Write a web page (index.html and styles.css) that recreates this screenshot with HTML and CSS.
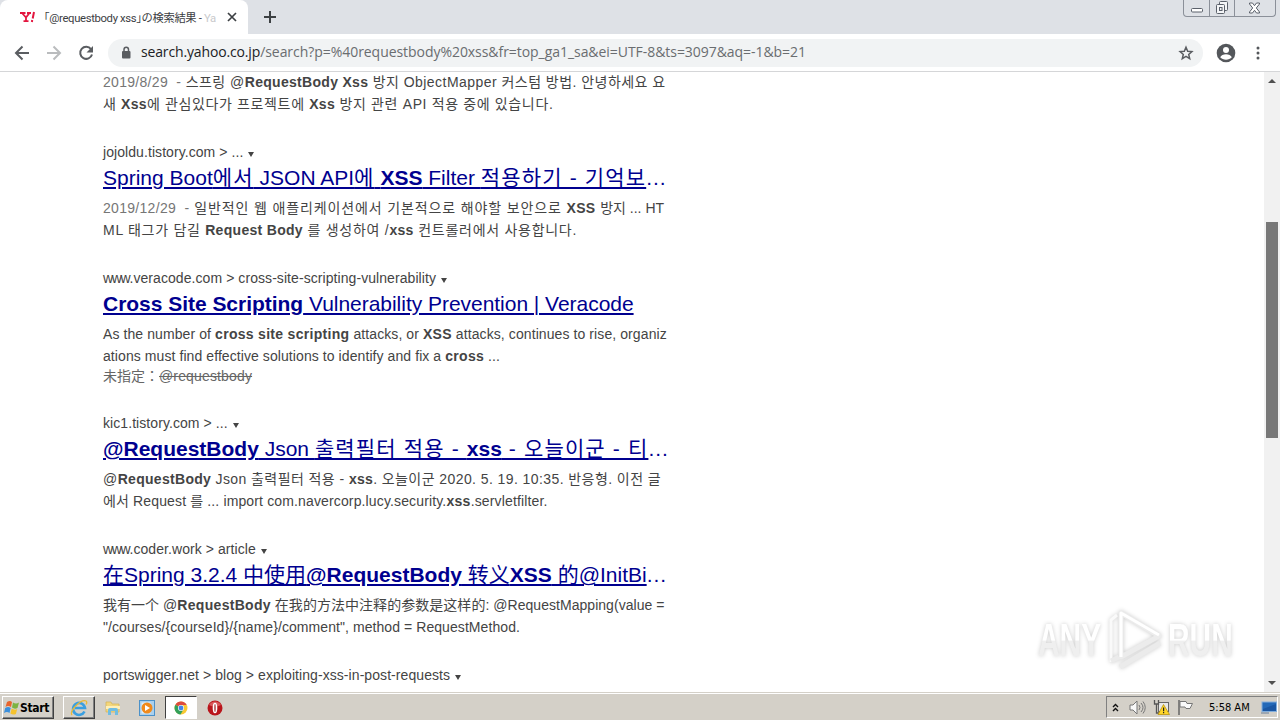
FILE: index.html
```html
<!DOCTYPE html>
<html lang="ja">
<head>
  <meta charset="UTF-8" />
  <title>「@requestbody xss」の検索結果 - Yahoo!検索</title>
  <link rel="stylesheet" href="styles.css">
</head>
<body>
  <div class="desktop">
    <header class="tab-strip">
      <div class="tab">
        <svg class="favicon" width="16" height="12" viewBox="0 0 16 12" fill="none" stroke="#e3163f"><path d="M0 2h5.500M7 2h4M2 2l4 4.500M9.500 2L6 6.500V10M3.500 10.200h5" stroke-width="1.800"/><path d="M14 1l-1.300 6.500M12.200 9l-.3 2" stroke-width="2"/></svg>
        <span class="tab-title">「@requestbody xss」の検索結果 - <span class="faded">Ya</span></span>
        <svg class="tab-close" width="10" height="10" viewBox="0 0 10 10"><path d="M1 1l8 8M9 1L1 9" stroke="#3c4043" stroke-width="1.700"/></svg>
      </div>
      <svg class="new-tab" width="12" height="12" viewBox="0 0 12 12"><path d="M6 0v12M0 6h12" stroke="#3c4043" stroke-width="2"/></svg>
      <div class="window-buttons">
        <span class="win-btn"><svg width="14" height="6" viewBox="0 0 14 6"><rect x="1.500" y="1.500" width="11" height="3.500" rx="1" fill="#fff" stroke="#5b616b"/></svg></span>
        <span class="win-btn"><svg width="14" height="14" viewBox="0 0 14 14" fill="#f4f5f7" stroke="#5b616b"><rect x="4.500" y=".5" width="8" height="9" rx="1"/><rect x="1.500" y="3.500" width="8" height="9" rx="1"/><rect x="4.500" y="6.500" width="2.500" height="3"/></svg></span>
        <span class="win-btn win-close"><svg width="13" height="12" viewBox="0 0 13 12"><path d="M1.500 1h3l2 2.700L8.500 1h3v1L8.300 6l3.200 4v1h-3l-2-2.700L4.500 11h-3v-1l3.200-4-3.200-4z" fill="#fff" stroke="#5b616b"/></svg></span>
      </div>
    </header>

    <nav class="toolbar">
      <svg class="nav-icon" width="16" height="16" viewBox="0 0 16 16"><path d="M15 8H2M8.500 1.500L2 8l6.500 6.500" fill="none" stroke="#5a5d61" stroke-width="2"/></svg>
      <svg class="nav-icon" width="16" height="16" viewBox="0 0 16 16"><path d="M1 8h13M7.500 1.500L14 8l-6.500 6.500" fill="none" stroke="#babcbe" stroke-width="2"/></svg>
      <svg class="nav-icon" width="16" height="16" viewBox="0 0 16 16"><path d="M13 4.200A6 6 0 1 0 14 9.500" fill="none" stroke="#5a5d61" stroke-width="2"/><path d="M15 1v6.500H8.500z" fill="#5a5d61"/></svg>
      <div class="omnibox">
        <svg class="lock" width="10" height="13" viewBox="0 0 10 13"><rect x="1" y="5" width="8.500" height="7.500" rx="1" fill="#5a5d61"/><path d="M3 5V3.500a2.200 2.200 0 0 1 4.500 0V5" fill="none" stroke="#5a5d61" stroke-width="1.500"/></svg>
        <span class="url"><span class="host">search.yahoo.co.jp</span>/search?p=%40requestbody%20xss&amp;fr=top_ga1_sa&amp;ei=UTF-8&amp;ts=3097&amp;aq=-1&amp;b=21</span>
        <svg class="star" width="16" height="16" viewBox="0 0 16 16"><path d="M8 2.200l1.700 4 4.200.4-3.200 2.800 1 4.200L8 11.400l-3.700 2.200 1-4.200-3.200-2.800 4.200-.4z" fill="none" stroke="#5a5d61" stroke-width="1.500"/></svg>
      </div>
      <svg class="avatar" width="20" height="20" viewBox="0 0 20 20"><circle cx="10" cy="10" r="9.300" fill="#54575b"/><circle cx="10" cy="7" r="3" fill="#fff"/><path d="M4.200 14.300c1.600-4 10-4 11.600 0-2.500 3.200-9.100 3.200-11.600 0z" fill="#fff"/></svg>
      <svg class="menu" width="4" height="14" viewBox="0 0 4 14" fill="#54575b"><circle cx="2" cy="2" r="1.500"/><circle cx="2" cy="7" r="1.500"/><circle cx="2" cy="12" r="1.500"/></svg>
    </nav>

    <div class="viewport">
      <main class="results">
        <article class="result">
          <p class="line l1"><span class="date">2019/8/29 &nbsp;-</span> 스프링 @<b>RequestBody Xss</b> 방지 ObjectMapper 커스텀 방법. 안녕하세요 요</p>
          <p class="line l2">새 <b>Xss</b>에 관심있다가 프로젝트에 <b>Xss</b> 방지 관련 API 적용 중에 있습니다.</p>
        </article>

        <article class="result">
          <cite>jojoldu.tistory.com &gt; ... <i class="caret"></i></cite>
          <h3><a>Spring Boot<span class="ko">에서</span> JSON API<span class="ko">에</span> <b>XSS</b> Filter <span class="ko">적용하기 - 기억보</span></a><span class="more">...</span></h3>
          <p class="line l3"><span class="date">2019/12/29 &nbsp;-</span> 일반적인 웹 애플리케이션에서 기본적으로 해야할 보안으로 <b>XSS</b> <span class="tail">방지 ... HT</span></p>
          <p class="line l4">ML 태그가 담길 <b>Request Body</b> 를 생성하여 /<b>xss</b> 컨트롤러에서 사용합니다.</p>
        </article>

        <article class="result">
          <cite><span class="www">www</span>.veracode.com &gt; cross-site-scripting-vulnerability <i class="caret"></i></cite>
          <h3><a class="narrow"><b>Cross Site Scripting</b> Vulnerability Prevention | Veracode</a></h3>
          <p class="line l5">As the number of <b>cross site scripting</b> attacks, or <b>XSS</b> attacks, continues to rise, organiz</p>
          <p class="line l6">ations must find effective solutions to identify and fix a <b>cross</b> ...</p>
          <p class="missing">未指定：<s>@requestbody</s></p>
        </article>

        <article class="result">
          <cite>kic1.tistory.com &gt; ... <i class="caret"></i></cite>
          <h3><a><b>@RequestBody</b> Json <span class="ko">출력필터 적용 - </span><b>xss</b><span class="ko"> - 오늘이군 - 티</span></a><span class="more">...</span></h3>
          <p class="line l7">@<b>RequestBody</b> Json 출력필터 적용 - <b>xss</b>. 오늘이군 2020. 5. 19. 10:35. 반응형. 이전 글</p>
          <p class="line l8">에서 Request 를 ... import com.navercorp.lucy.security.<b>xss</b>.servletfilter.</p>
        </article>

        <article class="result" lang="zh">
          <cite><span class="www">www</span>.coder.work &gt; article <i class="caret"></i></cite>
          <h3><a>在Spring 3.2.4 中使用<b>@RequestBody</b> 转义<b>XSS</b> 的@InitBi</a><span class="more">...</span></h3>
          <p class="line l9">我有一个 @<b>RequestBody</b> 在我的方法中注释的参数是这样的: @RequestMapping(value =</p>
          <p class="line l10">"/courses/{courseId}/{name}/comment", method = RequestMethod.</p>
        </article>

        <article class="result">
          <cite>portswigger.net &gt; blog &gt; exploiting-xss-in-post-requests <i class="caret"></i></cite>
        </article>
      </main>

      <div class="scrollbar">
        <i class="arrow up"></i>
        <div class="thumb"></div>
        <i class="arrow down"></i>
      </div>

      <div class="watermark">
        <span class="any">ANY</span>
        <svg width="60" height="66" viewBox="0 0 60 66" fill="none" stroke-linejoin="round">
          <path d="M16 6v44l38-21z" stroke="#ececec" stroke-width="5"/>
          <path d="M16 50V6l38 22" stroke="#fff" stroke-width="3"/>
          <path d="M12 8L6 13v42" stroke="#fafafa" stroke-width="3"/>
          <path d="M6 54l8-4M15 60l40-24" stroke="#ebebeb" stroke-width="5"/>
        </svg>
        <span class="run">RUN</span>
      </div>
    </div>

    <footer class="taskbar">
      <button class="start">
        <svg width="16" height="15" viewBox="0 0 16 15"><path d="M3 2q3-2 5 0L7 7Q4 5 1.500 7z" fill="#e8642c"/><path d="M9 2.500q3 2 6 0L13.500 8q-3 1.500-5.500-.5z" fill="#7cb342"/><path d="M1.200 8q3-2 5.500 0l-1.200 5Q3 11 0 13z" fill="#3b8fdc"/><path d="M7.700 8.500q3 2 5.500.5l-1.300 5q-3 1.300-5.500-.5z" fill="#f5c22e"/></svg>
        Start
      </button>
      <span class="task raised"><svg width="18" height="18" viewBox="0 0 18 18" fill="none"><path d="M14.500 12.500A6 6 0 1 1 15 9H5" stroke="#3a9fe0" stroke-width="2.600"/><path d="M2 16C-1 12 11 0 16 2c1 .5 1 2 0 3.500" stroke="#e9b936" stroke-width="1.300"/></svg></span>
      <span class="task"><svg width="18" height="18" viewBox="0 0 18 18"><path d="M2 3h5l1 2h7v8H2z" fill="#f3d67b" stroke="#d3b254" stroke-width=".7"/><path d="M2 7h14v3H2z" fill="#fff0b8"/><path d="M4 16v-5q0-2 2-2h6q2 0 2 2v5h-3v-4H7v4z" fill="#70bde2"/></svg></span>
      <span class="task"><svg width="18" height="18" viewBox="0 0 18 18"><rect x="1.500" y="1.500" width="15" height="15" fill="#a9d0ee" stroke="#4b91c9"/><rect x="3.500" y="3.500" width="9" height="11" fill="#e1f0fa"/><circle cx="9" cy="9" r="5.500" fill="#f08a1c"/><path d="M7 6l5 3-5 3z" fill="#fff"/></svg></span>
      <span class="task pressed"><svg width="14" height="14" viewBox="0 0 14 14"><circle cx="7" cy="7" r="6.500" fill="#f8c934"/><path d="M7 7L1.400 3.700A6.500 6.500 0 0 1 12.700 4H7z" fill="#dd4b3e"/><path d="M7 7L1.400 3.700A6.500 6.500 0 0 0 6.500 13.500L9.500 8.500z" fill="#33a05a"/><circle cx="7" cy="7" r="3" fill="#fff"/><circle cx="7" cy="7" r="2.400" fill="#4285e8"/></svg></span>
      <span class="task"><svg width="16" height="16" viewBox="0 0 16 16"><circle cx="8" cy="8" r="7.500" fill="#b9151b"/><path d="M2 5a7 7 0 0 1 12 0q-6 3-12 0z" fill="#d9585a"/><ellipse cx="8" cy="8" rx="2.300" ry="5.300" fill="#fff"/><ellipse cx="8" cy="8" rx=".8" ry="4" fill="#b04a4d"/></svg></span>

      <div class="tray">
        <svg class="chevrons" width="7" height="9" viewBox="0 0 7 9" fill="none" stroke="#111" stroke-width="1.400"><path d="M1 4l2.500-2.500L6 4M1 8l2.500-2.500L6 8"/></svg>
        <svg class="speaker" width="17" height="15" viewBox="0 0 17 15" fill="none" stroke="#777"><path d="M1 5h3l4-4v13l-4-4H1z" fill="#f8f8f8"/><path d="M10 5q2 2.500 0 5M12 3q4 4.500 0 9M14 1.500q4.500 6 0 12"/></svg>
        <svg class="network" width="17" height="16" viewBox="0 0 17 16"><rect x="5.500" y="3.500" width="10" height="9" fill="#e8e8e8" stroke="#666"/><path d="M1.500 1v4h4V1M3.500 5v9h5" fill="none" stroke="#555" stroke-width="1.300"/><path d="M10.500 5.500l6 10H5z" fill="#ffd629" stroke="#b38b00" stroke-width=".7"/><path d="M10.600 8.500v3.700M10.600 13v1.300" stroke="#222" stroke-width="1.200"/></svg>
        <svg class="flag" width="17" height="16" viewBox="0 0 17 16"><path d="M2 1v15" stroke="#666" stroke-width="1.500"/><path d="M3 2.500h6l1 2h5.500l-2.500 5H9l-1-1.500H3z" fill="#fafafa" stroke="#777"/></svg>
        <span class="clock">5:58 AM</span>
        <svg class="display" width="16" height="13" viewBox="0 0 16 13"><rect x="1" y="1" width="14.500" height="9.500" fill="#2469b8" stroke="#83aedb"/><path d="M2 8l13-5v7H2z" fill="#1b57a3"/><path d="M0 12h8" stroke="#8b9aab" stroke-width="1.500"/></svg>
      </div>
    </footer>
  </div>
</body>
</html>
```
FILE: styles.css
```css
* {
  margin: 0;
  padding: 0;
  box-sizing: border-box;
}

body {
  font-family: "Liberation Sans", Arial, "Noto Sans CJK KR", sans-serif;
  background-color: #fff;
  color: #444;
  overflow: hidden;
}

svg {
  display: block;
  flex: none;
}

.desktop {
  width: 1280px;
  height: 720px;
  display: flex;
  flex-direction: column;
}

/* browser chrome */
.tab-strip {
  height: 34px;
  background-color: #dee1e6;
  display: flex;
  align-items: flex-start;
}

.tab {
  width: 248px;
  height: 34px;
  padding: 0 11px 0 20px;
  background-color: #fff;
  border-radius: 8px 8px 0 0;
  display: flex;
  align-items: center;
}

.tab-title {
  width: 178px;
  margin-left: 8px;
  margin-right: -6px;
  font: 11.3px Roboto, "Noto Sans CJK JP", sans-serif;
  font-feature-settings: "halt";
  letter-spacing: -0.35px;
  white-space: nowrap;
  color: #3c4043;
}

.faded {
  color: #c9cacc;
}

.tab-close {
  margin-left: 11px;
}

.new-tab {
  margin: 11px 0 0 16px;
}

.window-buttons {
  margin-left: auto;
  margin-right: 4px;
  width: 93px;
  height: 17px;
  border: 1px solid #8b9099;
  border-top: 0;
  border-radius: 0 0 4px 4px;
  display: flex;
}

.win-btn {
  width: 25px;
  height: 16px;
  display: flex;
  justify-content: center;
  align-items: center;
}

.win-btn:first-child svg {
  margin-top: 4px;
}

.win-btn + .win-btn {
  border-left: 1px solid #8b9099;
}

.win-close {
  flex: 1;
  padding-right: 2px;
}

.toolbar {
  height: 38px;
  border-bottom: 1px solid #d5d6d8;
  padding: 0 20px 0 14px;
  display: flex;
  align-items: center;
}

.nav-icon {
  margin-right: 16px;
}

.omnibox {
  width: 1095px;
  height: 28px;
  margin-left: -2px;
  padding: 0 9px 0 13px;
  border-radius: 14px;
  background-color: #f1f3f4;
  display: flex;
  align-items: center;
}

.url {
  margin-left: 10px;
  font: 14px/18px "Open Sans", sans-serif;
  letter-spacing: -0.05px;
  color: #6a6d70;
  white-space: nowrap;
  padding-bottom: 2px;
}

.host {
  letter-spacing: -0.15px;
  color: #202124;
}

.star {
  margin-left: auto;
}

.avatar {
  margin-left: 13px;
}

.menu {
  margin-left: auto;
}

/* search results */
.viewport {
  height: 620px;
  display: flex;
  position: relative;
  overflow: hidden;
}

.results {
  width: 570px;
  margin: -1px 0 0 103px;
}

.result {
  margin-bottom: 27px;
  white-space: nowrap;
}

.result cite {
  display: block;
  height: 22px;
  font-size: 14px;
  font-style: normal;
  line-height: 20px;
  letter-spacing: 0.07px;
}

.www {
  letter-spacing: -1.3px;
}

.caret {
  display: inline-block;
  margin-left: 1px;
  border: 3.5px solid transparent;
  border-top: 5px solid #444;
  border-bottom: 0;
  vertical-align: 0;
}

.result h3 {
  height: 33px;
  font-size: 21px;
  font-weight: normal;
  line-height: 28px;
  color: #00008f;
}

.result h3 a {
  text-decoration: underline;
  text-decoration-thickness: 2px;
  text-underline-offset: 2px;
}

.result h3 .narrow {
  letter-spacing: -0.03px;
}

.ko {
  letter-spacing: 1.15px;
}

.more {
  letter-spacing: 1px;
}

.line {
  height: 22px;
  font-size: 14px;
  line-height: 22px;
}

.line b {
  letter-spacing: 0.3px;
}

.l1 { letter-spacing: 0.46px; }
.l2 { letter-spacing: 0.64px; }
.l3 { letter-spacing: 0.87px; }
.l4 { letter-spacing: 0.72px; }
.l5 { letter-spacing: 0.09px; }
.l6 { letter-spacing: 0.08px; }
.l7 { letter-spacing: 0.42px; }
.l8 { letter-spacing: 0.14px; }
.l9 { letter-spacing: 0.04px; }
.l10 { letter-spacing: 0.07px; }

.date {
  color: #767676;
}

.l1 .date,
.l3 .date {
  letter-spacing: 0.3px;
}

.line .tail {
  letter-spacing: 0;
}

.missing {
  height: 19px;
  font-size: 14px;
  line-height: 19px;
  color: #666;
}

.missing s {
  letter-spacing: 0.15px;
}

/* scrollbar */
.scrollbar {
  width: 16px;
  margin-left: auto;
  background-color: #f1f1f1;
  display: flex;
  flex-direction: column;
  align-items: center;
}

.thumb {
  width: 12px;
  height: 216px;
  margin-top: 139px;
  background-color: #787878;
}

.arrow {
  border: 4px solid transparent;
}

.up {
  margin-top: 3px;
  border-bottom-color: #505050;
}

.down {
  margin: auto 0 3px;
  border-top-color: #505050;
}

/* lies over the page content */
.watermark {
  position: absolute;
  left: 1038px;
  top: 535px;
  display: flex;
  align-items: center;
  font: bold 46px/66px "Liberation Sans", sans-serif;
  filter: drop-shadow(0 0 2px #ccc);
}

.watermark span {
  width: 102px;
  margin-right: -35px;
  color: transparent;
  background: linear-gradient(#fff 50%, #efefef 52%);
  -webkit-background-clip: text;
  background-clip: text;
  white-space: nowrap;
  transform: scaleX(.65);
  transform-origin: 0 50%;
}

.watermark .run {
  margin-left: 3px;
}

/* taskbar */
.taskbar {
  height: 28px;
  background-color: #d4d0c8;
  border-top: 1px solid #d4d0c8;
  box-shadow: inset 0 1px #fff;
  padding: 3px 0 1px 2px;
  display: flex;
}

.start {
  width: 52px;
  height: 23px;
  margin-right: 9px;
  padding-left: 1px;
  border: 1px solid;
  border-color: #fff #404040 #404040 #fff;
  box-shadow: inset -1px -1px #808080;
  background-color: #d4d0c8;
  font: bold 12px "DejaVu Sans Condensed", "DejaVu Sans", sans-serif;
  letter-spacing: -0.3px;
  color: #000;
  display: flex;
  align-items: center;
}

.task {
  width: 32px;
  height: 23px;
  margin-right: 2px;
  border: 1px solid transparent;
  display: flex;
  align-items: center;
  justify-content: center;
}

.raised {
  border-color: #fff #404040 #404040 #fff;
  box-shadow: inset -1px -1px #808080;
}

.pressed {
  border-color: #404040 #fff #fff #404040;
  background-color: #fff;
}

.tray {
  width: 172px;
  height: 22px;
  margin-left: auto;
  margin-right: 2px;
  padding-left: 5px;
  border: 1px solid;
  border-color: #808080 #fff #fff #808080;
  display: flex;
  align-items: center;
}

.speaker {
  margin-left: 10px;
}

.network {
  margin-left: 7px;
}

.flag {
  margin-left: 7px;
}

.clock {
  width: 47px;
  margin-left: 15px;
  font: 11px "DejaVu Sans Condensed", sans-serif;
  color: #000;
  white-space: nowrap;
}

.display {
  margin-left: 5px;
}
```
